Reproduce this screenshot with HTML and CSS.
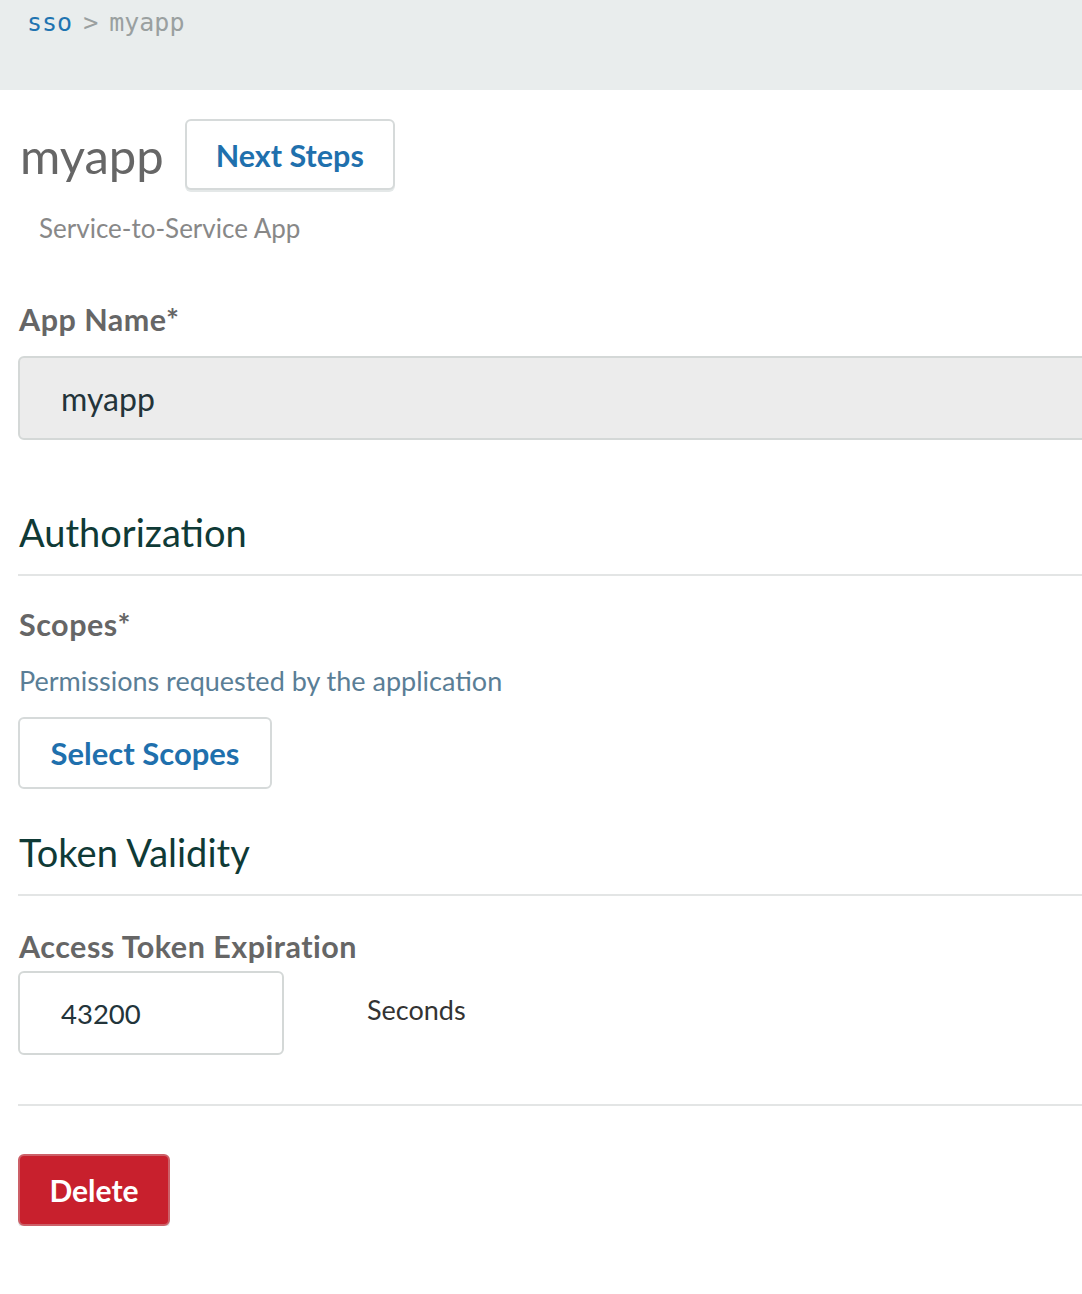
FILE: index.html
```html
<!DOCTYPE html>
<html>
<head>
<meta charset="utf-8">
<link rel="stylesheet" href="styles.css">
</head>
<body>
<header class="crumbs">
  <a class="crumb-link">sso</a>
  <span class="crumb-sep">&gt;</span>
  <span class="crumb-current">myapp</span>
</header>
<main class="page">
  <div class="title-row">
    <h1 class="app-title">myapp</h1>
    <button class="btn btn-outline btn-next">Next Steps</button>
  </div>
  <p class="app-type">Service-to-Service App</p>

  <label class="field-label label-appname">App Name*</label>
  <div class="input input-wide input-disabled">myapp</div>

  <h2 class="section-title title-auth">Authorization</h2>
  <hr class="rule">
  <label class="field-label label-scopes">Scopes*</label>
  <p class="help">Permissions requested by the application</p>
  <button class="btn btn-outline btn-scopes">Select Scopes</button>

  <h2 class="section-title title-token">Token Validity</h2>
  <hr class="rule">
  <label class="field-label label-access">Access Token Expiration</label>
  <div class="token-row">
    <div class="input input-small">43200</div>
    <span class="unit">Seconds</span>
  </div>
  <hr class="rule rule-bottom">
  <button class="btn btn-danger">Delete</button>
</main>
</body>
</html>
```
FILE: styles.css
```css
html, body {
  margin: 0;
  padding: 0;
  overflow: hidden;
  background: #ffffff;
}
body {
  font-family: Lato, "Noto Sans", sans-serif;
  width: 1082px;
}
.crumbs {
  box-sizing: border-box;
  height: 90px;
  background: #e9eded;
  padding: 5px 27px 0;
  font-family: "DejaVu Sans Mono", monospace;
  font-size: 25px;
  line-height: 36px;
  display: flex;
  gap: 11px;
}
.crumb-link { color: #1f74b1; }
.crumb-sep { color: #9aa0a0; }
.crumb-current { color: #9aa0a0; }

.page {
  padding-left: 18px;
  width: 1120px;
  display: flex;
  flex-direction: column;
  align-items: flex-start;
}
.title-row {
  display: flex;
  align-items: center;
  gap: 21px;
  margin-top: 29px;
}
.app-title {
  margin: 0;
  font-weight: 400;
  font-size: 49px;
  color: #666666;
  padding-left: 2px;
}
.btn {
  font-family: Lato, "Noto Sans", sans-serif;
  font-weight: 700;
  border-radius: 6px;
  cursor: pointer;
  padding: 0;
}
.btn-outline {
  background: #ffffff;
  border: 2px solid #d6dada;
  color: #1f70ad;
  font-size: 31px;
}
.btn-next {
  height: 71px;
  width: 210px;
  font-size: 30.5px;
  box-shadow: 0 2px 0 #e4e8e8;
}
.app-type {
  margin: 22px 0 0 21px;
  font-size: 26px;
  color: #888888;
}
.field-label {
  display: block;
  font-weight: 700;
  font-size: 30.5px;
  letter-spacing: 0.5px;
  color: #666666;
  padding-left: 1px;
}
.label-appname { margin-top: 57px; }
.input {
  box-sizing: border-box;
  border: 2px solid #d4d8d7;
  border-radius: 6px;
  font-size: 32px;
  color: #23343a;
  padding-left: 41px;
  display: flex;
  align-items: center;
}
.input-wide {
  margin-top: 19px;
  width: 1100px;
  height: 84px;
}
.input-disabled { background: #ececec; }
.section-title {
  margin: 0;
  font-weight: 400;
  font-size: 38px;
  color: #0f3a36;
  padding-left: 1px;
}
.title-auth { margin-top: 69px; }
.rule {
  align-self: stretch;
  border: 0;
  height: 2px;
  background: #e3e5e5;
  margin: 19px 0 0;
}
.label-scopes { margin-top: 30px; }
.help {
  margin: 22px 0 0 1px;
  font-size: 27px;
  color: #5a7e96;
}
.btn-scopes {
  margin-top: 20px;
  width: 254px;
  height: 72px;
}
.title-token { margin-top: 40px; }
.label-access { margin-top: 32px; }
.token-row {
  display: flex;
  align-items: center;
  gap: 83px;
  margin-top: 7px;
}
.input-small {
  width: 266px;
  height: 84px;
  background: #ffffff;
  font-size: 27.5px;
}
.unit {
  font-size: 27px;
  color: #333333;
  margin-top: -8px;
}
.rule-bottom { margin-top: 49px; }
.btn-danger {
  margin-top: 48px;
  width: 152px;
  height: 72px;
  background: #c8202d;
  border: 2px solid #cc6068;
  color: #ffffff;
  font-size: 30px;
  box-shadow: 0 2px 0 #e4e8e8;
}
```
